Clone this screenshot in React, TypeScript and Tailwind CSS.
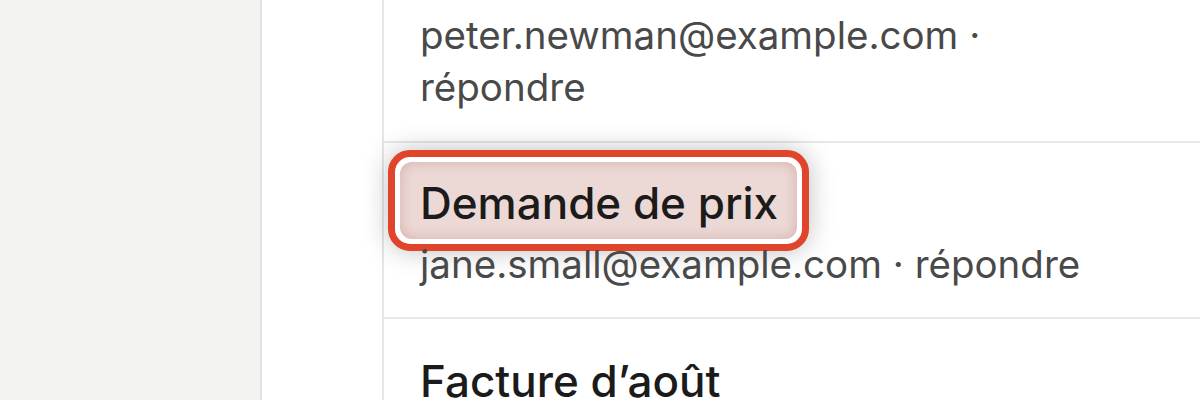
import React from "react";

const font = { fontFamily: "Inter, 'Noto Sans', sans-serif" };

export default function App() {
  return (
    <div className="flex h-[400px] w-[1200px] overflow-hidden bg-white" style={font}>
      <div className="w-[262px] shrink-0 bg-[#f3f3f1] border-r-2 border-[#e3e3e1]" />
      <div className="w-[122px] shrink-0 bg-white border-r-2 border-[#e6e6e4]" />
      <div className="flex-1 flex flex-col">
        <div className="pl-[36px] pt-[9px] pb-[28px] border-b-2 border-[#e8e8e6]">
          <div className="text-[38.5px] leading-[52px] text-[#494949] w-[600px]">
            peter.newman@example.com · répondre
          </div>
        </div>
        <div className="pl-[36px] pt-[34px] pb-[27px] border-b-2 border-[#e8e8e6]">
          <div className="text-[44px] leading-[52px] font-medium text-[#1b1b1b]">
            <span className="inline-block -ml-[32px] -mt-[27px] -mb-[22px] rounded-[22px] border-[7px] border-[#e0452b] bg-white p-[5px] shadow-[0_0_26px_rgba(0,0,0,0.25)]">
              <span className="block rounded-[12px] bg-[#ecd9d6] pl-[20px] pr-[19px] pt-[15px] pb-[10px] shadow-[inset_0_0_14px_rgba(160,80,70,0.3)]">
                Demande de prix
              </span>
            </span>
          </div>
          <div className="mt-[9px] text-[38.5px] leading-[52px] text-[#494949]">
            jane.small@example.com · répondre
          </div>
        </div>
        <div className="pl-[36px] pt-[36px]">
          <div className="text-[44px] leading-[52px] font-medium text-[#1b1b1b]">
            Facture d’août
          </div>
        </div>
      </div>
    </div>
  );
}
